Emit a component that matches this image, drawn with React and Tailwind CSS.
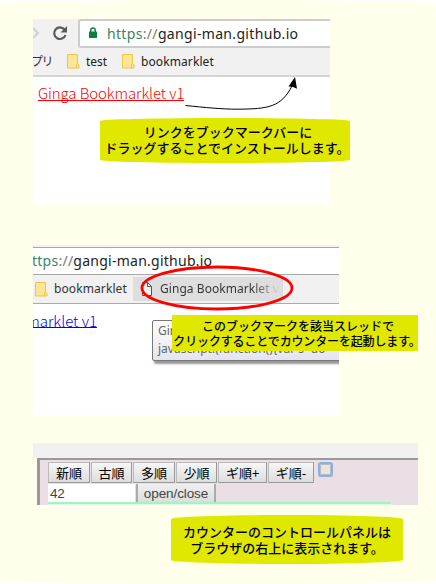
import React from "react";

const ui = "font-['Noto_Sans','Noto_Sans_CJK_JP',sans-serif] whitespace-pre";

function Folder({ className = "" }) {
  return (
    <svg className={`shrink-0 ${className}`} width="13" height="15" viewBox="0 0 13 15">
      <path d="M.5 .5h10v9.500l1.500 1v3h-11.500z" fill="#ffe694" stroke="#e8c64c" />
      <path d="M9.500 14v-3l1-1.500" fill="none" stroke="#e8c64c" />
    </svg>
  );
}

function Callout({ className, lines }) {
  return (
    <div className={`absolute flex flex-col items-center bg-[#e0e800] font-['Noto_Sans_CJK_JP',sans-serif] font-medium text-black whitespace-nowrap ${className}`}>
      {lines.map((line) => (
        <span key={line.text} className={`block ${line.className}`}>{line.text}</span>
      ))}
    </div>
  );
}

function InstallPanel() {
  return (
    <section className="relative ml-[33px] h-[184px] w-[297px] bg-white">
      <div className="h-full overflow-hidden">
        <div className="flex h-[29px] bg-[#f1f1f1]">
          <svg className="shrink-0" width="45" height="29" viewBox="0 0 45 29">
            <path d="M0 9l5 5-5 5" fill="none" stroke="#cfcfcf" strokeWidth="2" />
            <path d="M31.500 10.500A5.800 5.800 0 1 0 32.500 16" fill="none" stroke="#5a5a5a" strokeWidth="2.200" />
            <path d="M34 7v6.500h-6.500z" fill="#5a5a5a" />
          </svg>
          <div className="flex flex-1 rounded-l-[3px] border-2 border-r-0 border-[#ccc] bg-white pl-[9px]">
            <svg className="mt-[6px] shrink-0" width="8" height="12" viewBox="0 0 8 12">
              <path d="M1.800 6V3.200a2.200 2.200 0 0 1 4.400 0V6" fill="none" stroke="#0b8043" strokeWidth="1.500" />
              <rect y="4.500" width="8" height="6.500" rx=".6" fill="#0b8043" />
            </svg>
            <span className={`${ui} ml-[10px] text-[14px] leading-[25px] tracking-[0.33px] text-[#222]`}>
              <span className="text-[#3d8560]">https</span>
              <span className="text-[#777]">://</span>gangi-man.github.io
            </span>
          </div>
        </div>
        <div className="flex h-[29px] items-center border-b-2 border-[#d5d5d5] bg-[#f1f1f1]">
          <span className={`${ui} -ml-[2px] w-[36px] text-[12px] tracking-[-1.500px] text-[#333]`}>プリ</span>
          <Folder />
          <span className={`${ui} ml-[6px] w-[36px] text-[12px] text-[#222]`}>test</span>
          <Folder />
          <span className={`${ui} ml-[6px] text-[12px] tracking-[0.1px] text-[#222]`}>bookmarklet</span>
        </div>
        <div className="mt-[8px] ml-[5px] h-[16px] w-[146px] border-b border-[#f00] font-['Noto_Sans_CJK_JP',sans-serif] text-[15px] leading-[15px] font-light tracking-[-0.1px] whitespace-nowrap text-[#f00]">
          Ginga Bookmarklet v1
        </div>
      </div>
      <svg className="absolute top-0 left-0" width="297" height="100" viewBox="33 19 297 100">
        <path d="M185.500 105.500C205 107.500 222 109.200 237 109.200C269 109 281 107 292 86" fill="none" stroke="#000" />
        <path d="M295 77l-6.500 9.500 4 .3 4.500 2z" />
      </svg>
      <Callout
        className="top-[99px] left-[67px] h-[45px] w-[250px] rounded-[50%/3px] pt-[6px] text-[13px] leading-4"
        lines={[
          { text: "リンクをブックマークバーに", className: "ml-[6px]" },
          { text: "ドラッグすることでインストールします。", className: "ml-[4px]" },
        ]}
      />
    </section>
  );
}

function LaunchPanel() {
  return (
    <section className="relative mt-[42px] ml-[33px] h-[170px] w-[306px] bg-white">
      <div className="h-full overflow-hidden">
        <div className="h-[2px] bg-[#f1f1f1]" />
        <div className="flex h-[28px] border-y border-[#a9a9a9]">
          <span className={`${ui} -ml-px text-[14px] leading-[26px] tracking-[0.25px] text-[#222]`}>
            <span className="text-[#3d8560]">ttps</span>
            <span className="text-[#777]">://</span>gangi-man.github.io
          </span>
        </div>
        <div className="flex h-[29px] items-center border-b border-[#aaa] bg-[#f1f1f1]">
          <Folder className="ml-[2px]" />
          <span className={`${ui} ml-[6px] w-[79px] text-[12px] tracking-[0.1px] text-[#333]`}>bookmarklet</span>
          <div className="flex h-[24px] w-[150px] items-center bg-[#dedede] pl-[9px]">
            <svg className="shrink-0" width="10" height="14" viewBox="0 0 10 14">
              <path d="M.5 .5h5l4 4v9h-9z" fill="#f1f1f1" stroke="#555" />
              <path d="M5.500 .5v4h4" fill="none" stroke="#555" />
            </svg>
            <span className={`${ui} ml-[8px] w-[123px] bg-linear-to-r from-[#333] from-75% to-transparent to-97% bg-clip-text text-[12px] tracking-[0.05px] text-transparent`}>Ginga Bookmarklet v1</span>
          </div>
        </div>
        <div className="flex h-[16px]">
          <div className="mt-[9px] flex w-[64px] shrink-0 justify-end">
            <span className="h-[15px] border-b border-[#00f] font-['Noto_Sans_CJK_JP',sans-serif] text-[15px] leading-[15px] font-light whitespace-nowrap text-[#00e]">marklet v1</span>
          </div>
        </div>
        <div className={`${ui} ml-[119px] h-[41px] w-[200px] rounded-[2px] border border-[#777] bg-linear-to-b from-white to-[#e4e4f0] pl-[5px] text-[12px] leading-[18px] text-[#666] shadow-[2px_3px_2px_#999]`}>
          <div className="mt-px">Ginga Bookmarklet v1</div>
          <div>{"javascript:(function(){var s=do"}</div>
        </div>
      </div>
      <svg className="absolute top-[18px] left-[104px]" width="160" height="50" viewBox="137 263 160 50">
        <ellipse cx="217" cy="288" rx="75" ry="21" fill="none" stroke="#f00" strokeWidth="2.800" />
      </svg>
      <Callout
        className="top-[70px] left-[139px] h-[36px] w-[246px] pt-[3px] text-[12px] leading-[15px]"
        lines={[
          { text: "このブックマークを該当スレッドで", className: "ml-[6px]" },
          { text: "クリックすることでカウンターを起動します。", className: "ml-[4px] tracking-[-0.15px]" },
        ]}
      />
    </section>
  );
}

function PanelButton({ children, className }) {
  return (
    <div className={`flex h-[21px] items-center justify-center border border-[#999] border-t-[#bbb] border-l-[#bbb] bg-linear-to-b from-[#f6f6f6] to-[#ddd] font-['Noto_Sans_CJK_JP',sans-serif] text-[13px] leading-none text-black whitespace-nowrap ${className}`}>
      {children}
    </div>
  );
}

function ControlPanel() {
  return (
    <section className="relative mt-[28px] ml-[33px] h-[62px] w-[385px]">
      <div className="h-[15px] bg-[#f1f1f1]" />
      <div className="ml-[4px] h-[47px] border-t-2 border-l-[3px] border-[#999] bg-[#eadfe5] pl-[8px]">
        <div className="flex h-[24px] gap-px pt-[2px]">
          <PanelButton className="w-[42px]">新順</PanelButton>
          <PanelButton className="w-[41px]">古順</PanelButton>
          <PanelButton className="w-[42px]">多順</PanelButton>
          <PanelButton className="w-[41px]">少順</PanelButton>
          <PanelButton className="w-[49px]">ギ順+</PanelButton>
          <PanelButton className="w-[46px]">ギ順-</PanelButton>
          <div className="ml-[3px] h-[15px] w-[15px] rounded-[3px] border-2 border-[#8eade6] bg-[#e5e5e5] shadow-[inset_0_0_0_1px_#bbb]" />
        </div>
        <div className="flex h-[20px] w-[343px] border-b-2 border-[#9df5c4] font-['Liberation_Sans',sans-serif] text-[13.500px] leading-[19px] text-[#444]">
          <div className="w-[87px] bg-white pl-[2px] tracking-[-0.3px]">42</div>
          <div className="ml-px w-[80px] border-r-2 border-l-2 border-[#aaa] bg-linear-to-b from-[#f0f0f0] to-[#ddd] text-center tracking-[-0.1px]">open/close</div>
        </div>
        <div className="h-px w-[343px] bg-[#e8f6e8]" />
      </div>
      <Callout
        className="top-[72px] left-[138px] h-[49px] w-[232px] rounded-[50%/4px] pt-[9px] text-[13px] leading-4"
        lines={[
          { text: "カウンターのコントロールパネルは", className: "" },
          { text: "ブラウザの右上に表示されます。", className: "" },
        ]}
      />
    </section>
  );
}

export default function App() {
  return (
    <main className="h-[584px] w-[436px] overflow-hidden bg-white">
      <div className="h-[584px] rounded-[50%/4px] bg-[#ffffec] pt-[19px]">
        <InstallPanel />
        <LaunchPanel />
        <ControlPanel />
      </div>
    </main>
  );
}
